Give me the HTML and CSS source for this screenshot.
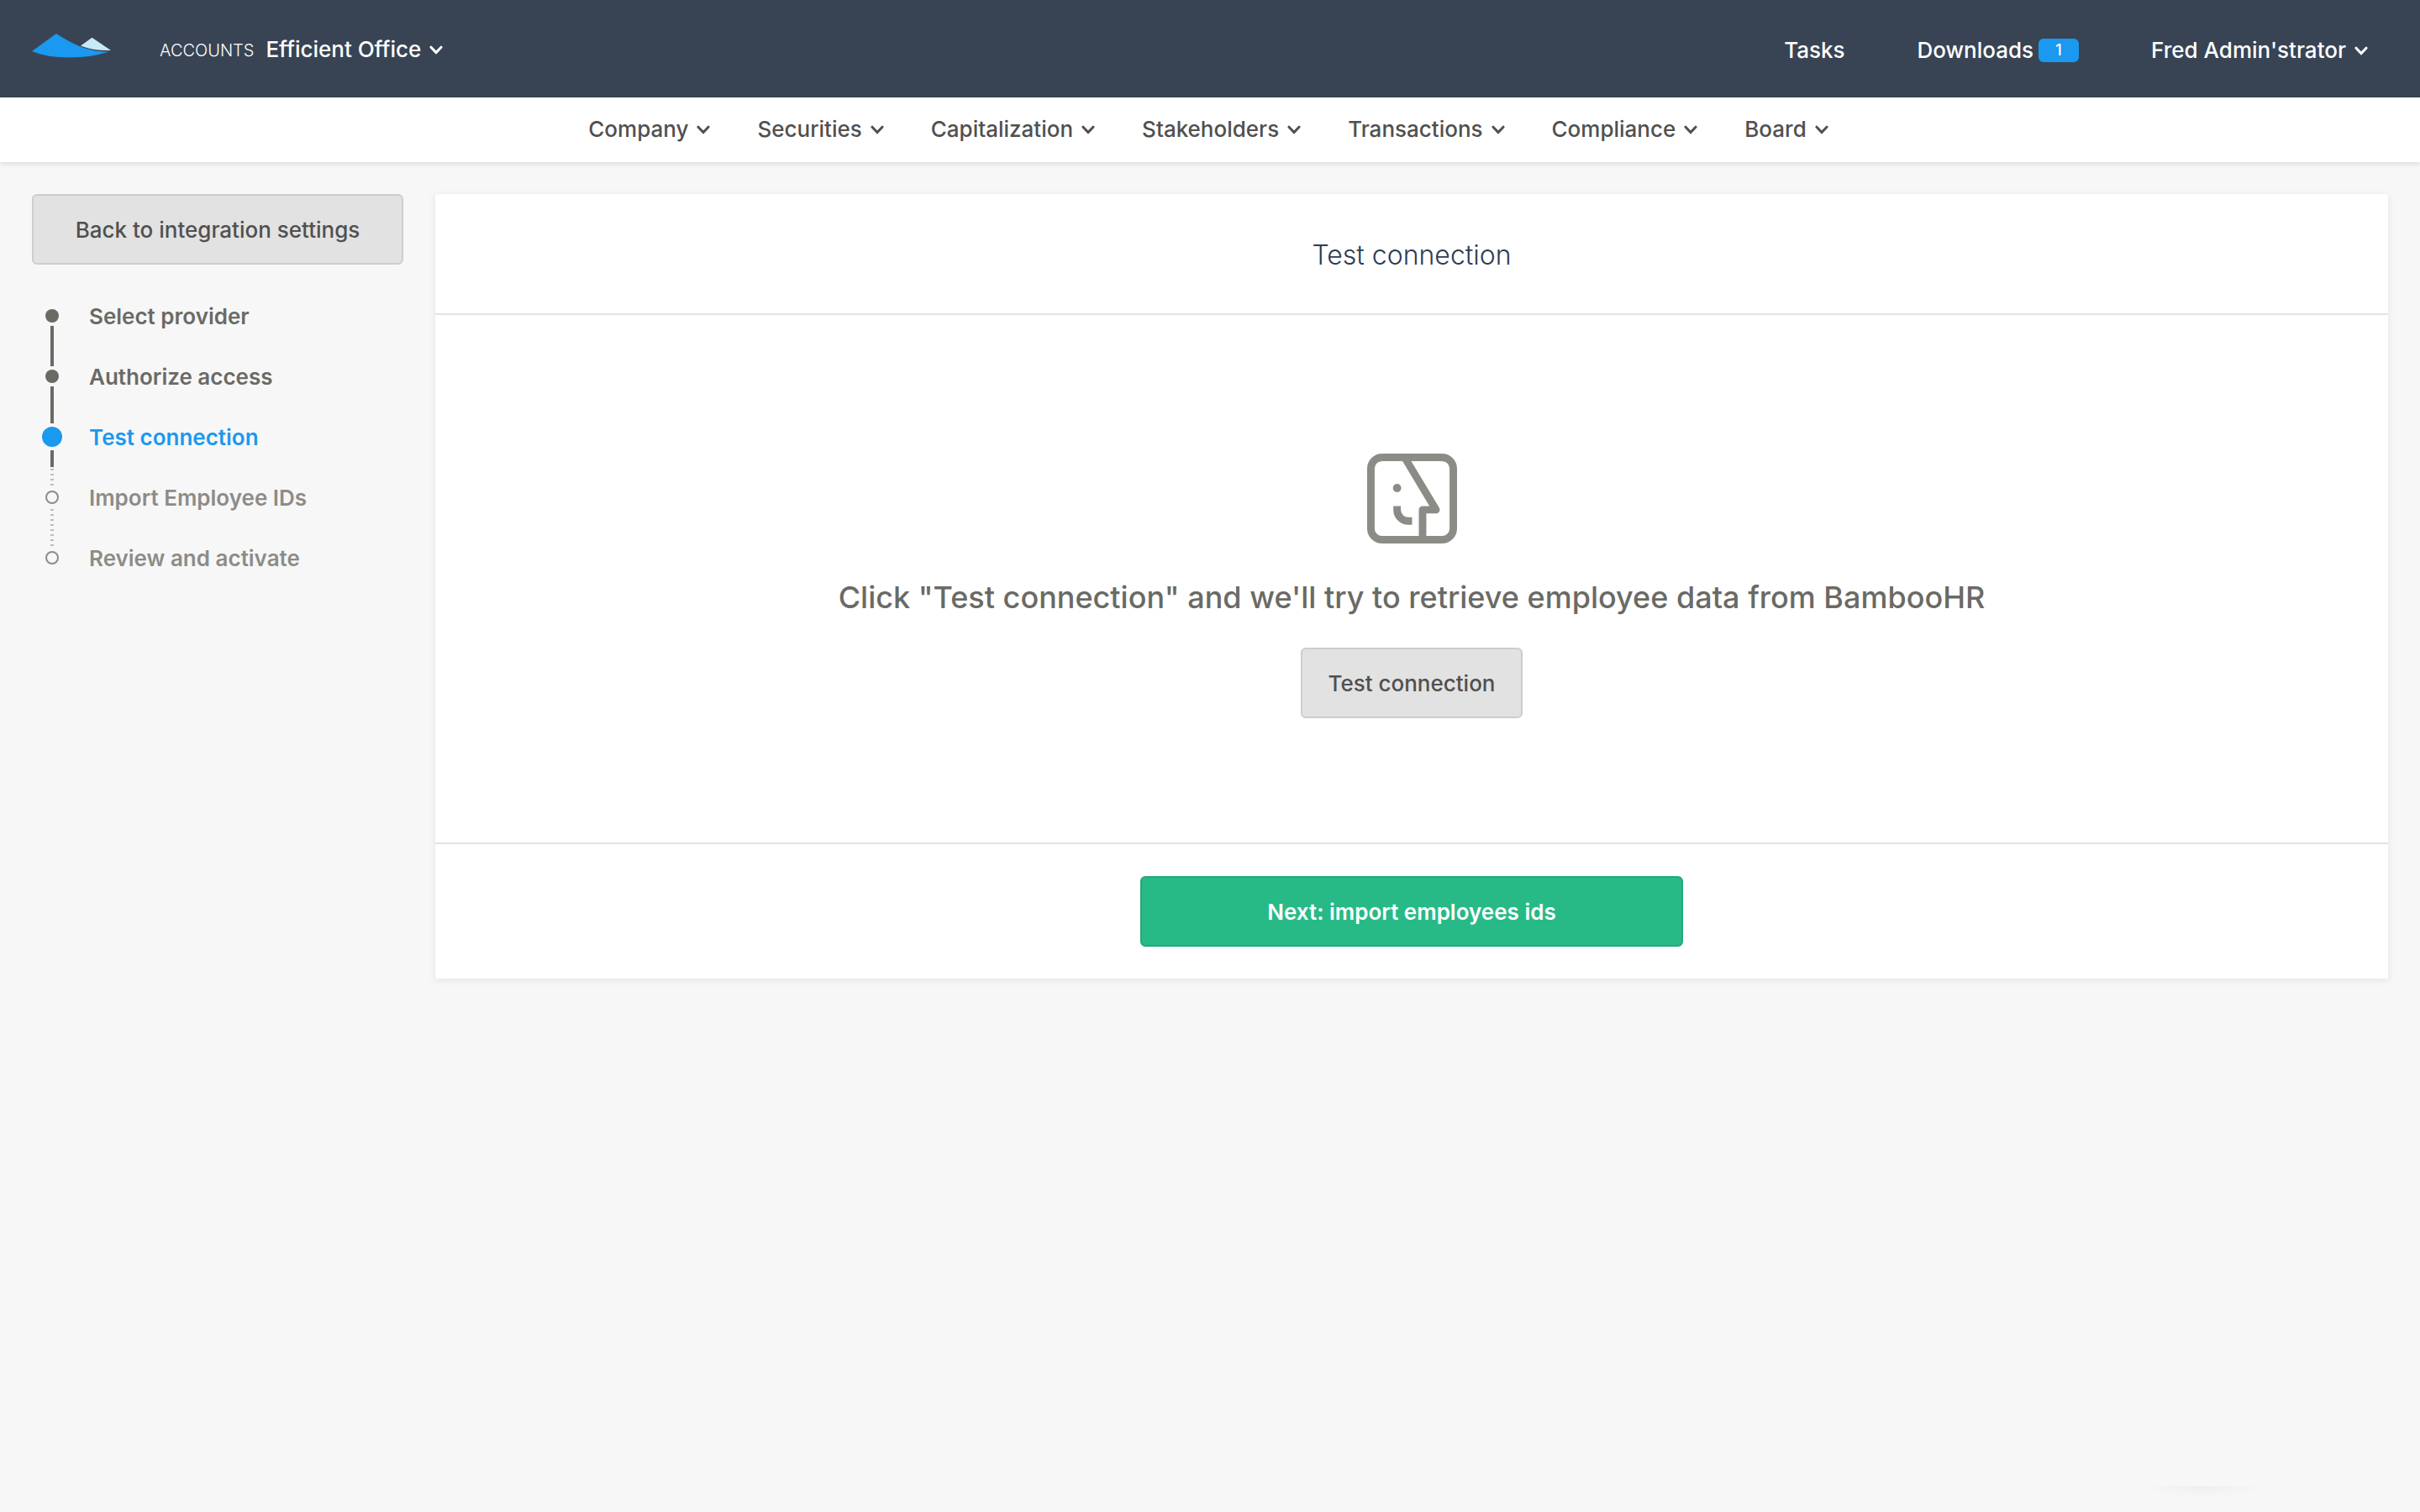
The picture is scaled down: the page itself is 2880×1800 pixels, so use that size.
FILE: index.html
```html
<!DOCTYPE html>
<html lang="en">
<head>
<meta charset="utf-8">
<meta name="viewport" content="width=device-width, initial-scale=1">
<title>Test connection</title>
<link rel="stylesheet" href="styles.css">
</head>
<body>
<svg class="defs" aria-hidden="true">
  <symbol id="chevron" viewBox="0 0 16 11"><path d="M2 2.2 8 8.6 14 2.2" fill="none" stroke="currentColor" stroke-width="3" stroke-linecap="round"/></symbol>
</svg>

<header class="topbar">
  <div class="account">
    <a class="logo" href="#" aria-label="Home">
      <svg width="94" height="30" viewBox="0 0 94 30">
        <path d="M29 0 0 21Q17 28.500 45 28.500Q70 28.500 92 21.500Q74 21.500 59 16Q46 11 29 0Z" fill="#1b98ef"/>
        <path d="M71.500 4.700 94 20Q73 20.500 58 14.500Z" fill="#c7ebf4"/>
      </svg>
    </a>
    <span class="account-label">ACCOUNTS</span>
    <button class="menu" type="button">Efficient Office<svg class="chevron"><use href="#chevron"/></svg></button>
  </div>
  <div class="user-links">
    <a class="link" href="#">Tasks</a>
    <a class="link" href="#">Downloads<span class="badge">1</span></a>
    <button class="menu" type="button">Fred Admin'strator<svg class="chevron"><use href="#chevron"/></svg></button>
  </div>
</header>

<nav class="nav">
  <button class="menu" type="button">Company<svg class="chevron"><use href="#chevron"/></svg></button>
  <button class="menu" type="button">Securities<svg class="chevron"><use href="#chevron"/></svg></button>
  <button class="menu" type="button">Capitalization<svg class="chevron"><use href="#chevron"/></svg></button>
  <button class="menu" type="button">Stakeholders<svg class="chevron"><use href="#chevron"/></svg></button>
  <button class="menu" type="button">Transactions<svg class="chevron"><use href="#chevron"/></svg></button>
  <button class="menu" type="button">Compliance<svg class="chevron"><use href="#chevron"/></svg></button>
  <button class="menu" type="button">Board<svg class="chevron"><use href="#chevron"/></svg></button>
</nav>

<div class="page">
  <aside class="sidebar">
    <button class="btn" type="button">Back to integration settings</button>
    <ol class="steps">
      <li class="step done"><span class="track"><i class="line none"></i><i class="dot"></i><i class="line"></i></span><span class="step-name">Select provider</span></li>
      <li class="step done"><span class="track"><i class="line"></i><i class="dot"></i><i class="line"></i></span><span class="step-name">Authorize access</span></li>
      <li class="step current" aria-current="step"><span class="track"><i class="line"></i><i class="dot"></i><i class="line"></i></span><span class="step-name">Test connection</span></li>
      <li class="step todo"><span class="track"><i class="line"></i><i class="dot"></i><i class="line"></i></span><span class="step-name">Import Employee IDs</span></li>
      <li class="step todo"><span class="track"><i class="line"></i><i class="dot"></i><i class="line none"></i></span><span class="step-name">Review and activate</span></li>
    </ol>
  </aside>

  <main class="card">
    <h1 class="card-title">Test connection</h1>
    <section class="card-body">
      <svg class="face" width="107" height="107" viewBox="0 0 24 24" fill="none" stroke="currentColor" stroke-width="2" aria-hidden="true">
        <rect x="1" y="1" width="22" height="22" rx="3"/>
        <path d="M10 1 18.400 15H14.800V23" stroke-linejoin="round"/>
        <path d="M8 14v1a3 3 0 0 0 3 3h1"/>
        <circle cx="8" cy="9.200" r="1.100" fill="currentColor" stroke="none"/>
      </svg>
      <h2 class="message">Click "Test connection" and we'll try to retrieve employee data from BambooHR</h2>
      <button class="btn" type="button">Test connection</button>
    </section>
    <footer class="card-footer">
      <button class="btn primary" type="button">Next: import employees ids</button>
    </footer>
  </main>
</div>
<div class="chat-shadow"></div>
</body>
</html>
```
FILE: styles.css
```css
* { box-sizing: border-box; }

body {
  margin: 0;
  min-height: 100vh;
  background: #f7f7f7;
  color: #505050;
  font: 500 26px/36px Inter, "Liberation Sans", sans-serif;
}

button { font: inherit; color: inherit; cursor: pointer; }
.defs { display: none; }

/* Top bar */
.topbar {
  display: flex;
  align-items: center;
  justify-content: space-between;
  min-height: 116px;
  padding: 0 62px 0 38px;
  background: #384454;
  color: #fff;
}
.account { display: flex; align-items: center; padding-top: 2px; }
.logo { display: flex; margin: 0 58px 8px 0; }
.account-label { margin-right: 14px; padding-top: 2px; font-size: 20px; font-weight: 300; }
.account .menu { gap: 10px; }
.user-links { display: flex; align-items: center; gap: 86px; padding-top: 4px; }
.link { display: flex; align-items: center; color: inherit; text-decoration: none; }
.badge {
  min-width: 48px;
  margin-left: 6px;
  border-radius: 6px;
  background: #1b98ef;
  font-size: 18px;
  line-height: 28px;
  text-align: center;
}
.menu {
  display: flex;
  align-items: center;
  gap: 10px;
  padding: 0;
  border: 0;
  background: none;
}
.chevron { width: 16px; height: 11px; }

/* Section navigation */
.nav {
  display: flex;
  justify-content: center;
  gap: 56px;
  padding: 20px 42px 21px 38px;
  background: #fff;
  box-shadow: 0 2px 6px rgba(0, 0, 0, .12);
}

/* Page columns */
.page {
  display: grid;
  grid-template-columns: 442px 1fr;
  align-items: start;
  gap: 38px;
  padding: 38px;
}
.sidebar { display: flex; flex-direction: column; gap: 25px; }

.btn {
  min-height: 84px;
  padding: 2px 30px 0;
  border: 2px solid #cdcdcd;
  border-radius: 6px;
  background: #e2e2e2;
}
.btn.primary {
  width: 646px;
  border-color: #23a979;
  background: #27ba87;
  color: #fff;
  font-weight: 600;
}

/* Progress steps */
.steps { margin: 0; padding: 0; list-style: none; }
.step { display: flex; align-items: center; gap: 20px; height: 72px; font-weight: 600; }
.step-name { padding-top: 2px; }
.track {
  display: flex;
  flex-direction: column;
  align-items: center;
  gap: 4px;
  width: 48px;
  height: 100%;
}
.line { flex: 1; width: 4px; background: #6a6a65; }
.dot { width: 16px; height: 16px; border-radius: 50%; background: #6a6a65; }
.done { color: #6a6a65; }
.current { color: #1b98ef; }
.current .dot { width: 24px; height: 24px; background: #1b98ef; }
.todo { color: #8c8c88; }
.todo .dot { border: 2px solid #8c8c88; background: none; }
.todo .line {
  background: repeating-linear-gradient(transparent 0 2px, #bdbdba 2px 4px, transparent 4px 6px);
}
.step .none { background: none; }

/* Main card */
.card {
  border-radius: 2px;
  background: #fff;
  box-shadow: 0 2px 8px rgba(60, 90, 130, .12);
}
.card-title {
  margin: 0;
  padding: 49px 38px 45px;
  border-bottom: 2px solid #e2e2e2;
  color: #303c52;
  font-size: 32px;
  font-weight: 300;
  line-height: 48px;
  text-align: center;
}
.card-body {
  display: flex;
  flex-direction: column;
  align-items: center;
  padding: 165px 38px 148px;
}
.face { color: #8c8c87; }
.message {
  margin: 37px 0 33px;
  color: #6a6a65;
  font-size: 36px;
  font-weight: 500;
  line-height: 54px;
  text-align: center;
}
.card-footer {
  display: flex;
  justify-content: center;
  padding: 38px;
  border-top: 2px solid #e2e2e2;
}

/* Faint shadow of the closed chat launcher */
.chat-shadow {
  position: fixed;
  right: 180px;
  bottom: 17px;
  width: 155px;
  height: 14px;
  background: radial-gradient(ellipse at top, #efefef, #f7f7f7 70%);
}
```
